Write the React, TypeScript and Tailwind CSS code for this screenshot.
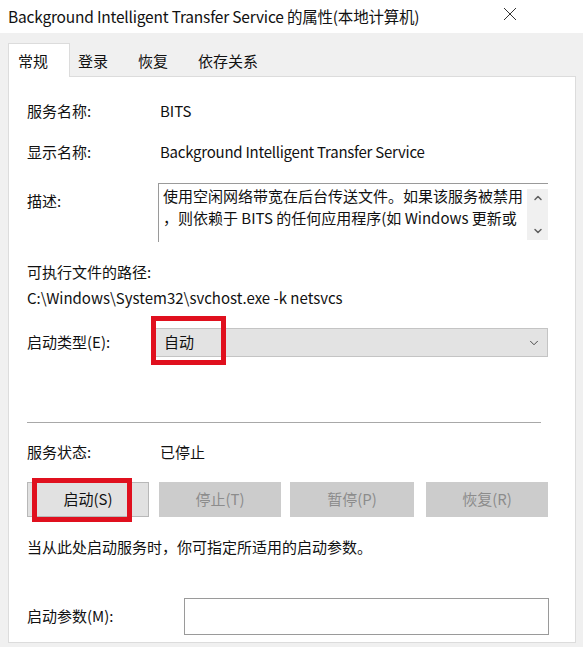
import { ChevronDown, ChevronUp } from 'lucide-react';

const font = { fontFamily: '"Noto Sans CJK SC", "Noto Sans", sans-serif' };

function RedBox({ className }: { className: string }) {
  return <div className={`absolute border-[5px] border-[#e0101e] pointer-events-none ${className}`} />;
}

export default function App() {
  const buttons = [
    { label: '停止(T)', w: 'w-[122px]', ml: 'ml-[10px]' },
    { label: '暂停(P)', w: 'w-[124px]', ml: 'ml-[9px]' },
    { label: '恢复(R)', w: 'w-[122px]', ml: 'ml-[12px]' },
  ];

  return (
    <div className="w-[583px] h-[647px] bg-[#f0f0f0] overflow-hidden flex flex-col text-[15px] text-[#111]" style={font}>
      {/* title bar */}
      <div className="h-[33px] bg-white flex items-center justify-between pl-[8px] pr-[66px] shrink-0">
        <span className="text-[15.5px] leading-none tracking-[-0.2px]">Background Intelligent Transfer Service 的属性(本地计算机)</span>
        <svg width="14" height="14" viewBox="0 0 14 14" className="mb-[6px]">
          <path d="M1 1L13 13M13 1L1 13" stroke="#333" strokeWidth="1" />
        </svg>
      </div>

      {/* tabs */}
      <div className="flex items-end pl-[8px] pt-[9px] h-[43px] shrink-0">
        <div className="w-[62px] h-[34px] bg-white border border-b-0 border-[#dcdcdc] pl-[9px] pt-[6px] relative z-10 -mb-px">常规</div>
        <div className="w-[60px] h-[30px] pl-[8px] pt-[4px]">登录</div>
        <div className="w-[60px] h-[30px] pl-[8px] pt-[4px]">恢复</div>
        <div className="w-[80px] h-[30px] pl-[8px] pt-[4px]">依存关系</div>
      </div>

      {/* panel */}
      <div className="ml-[8px] w-[568px] h-[567px] bg-white border border-[#dcdcdc] flex flex-col pl-[18px] shrink-0">
        <div className="flex items-center h-[20px] mt-[24px]">
          <span className="w-[133px]">服务名称:</span>
          <span>BITS</span>
        </div>
        <div className="flex items-center h-[20px] mt-[21px]">
          <span className="w-[133px]">显示名称:</span>
          <span className="tracking-[-0.25px]">Background Intelligent Transfer Service</span>
        </div>
        <div className="flex mt-[21px]">
          <span className="w-[131px] pt-[7px]">描述:</span>
          <div className="w-[390px] h-[59px] border-t border-l border-[#9a9a9a] flex">
            <div className="flex-1 pl-[4px] pt-[1px] leading-[22px] whitespace-nowrap overflow-hidden">
              <div>使用空闲网络带宽在后台传送文件。如果该服务被禁用</div>
              <div>，则依赖于 BITS 的任何应用程序(如 Windows 更新或</div>
            </div>
            <div className="w-[21px] h-[51px] mt-[5px] bg-[#f0f0f0] flex flex-col items-center justify-between py-[3px] shrink-0">
              <ChevronUp className="w-[12px] h-[12px] text-[#606060]" strokeWidth={3} />
              <ChevronDown className="w-[12px] h-[12px] text-[#606060]" strokeWidth={3} />
            </div>
          </div>
        </div>
        <div className="h-[20px] flex items-center mt-[20px]">可执行文件的路径:</div>
        <div className="h-[20px] flex items-center mt-[6px]">C:\Windows\System32\svchost.exe -k netsvcs</div>
        <div className="flex items-center mt-[20px]">
          <span className="w-[128px]">启动类型(E):</span>
          <div className="relative w-[393px] h-[29px] bg-[#e3e3e3] border border-[#c4c4c4] flex items-center justify-between pl-[8px] pr-[6px]">
            <span>自动</span>
            <ChevronDown className="w-[14px] h-[14px] text-[#333]" strokeWidth={1.5} />
            <RedBox className="-left-[5px] -top-[13px] w-[75px] h-[49px]" />
          </div>
        </div>
        <div className="w-[514px] h-px bg-[#a8a8a8] mt-[65px]" />
        <div className="flex items-center h-[20px] mt-[19px]">
          <span className="w-[133px]">服务状态:</span>
          <span>已停止</span>
        </div>
        <div className="flex mt-[20px]">
          <div className="relative w-[122px] h-[35px] bg-[#e1e1e1] border border-[#b8b8b8] flex items-center justify-center">
            启动(S)
            <RedBox className="left-[4px] -top-[5px] w-[100px] h-[44px]" />
          </div>
          {buttons.map((b) => (
            <div key={b.label} className={`${b.w} ${b.ml} h-[35px] bg-[#cccccc] text-[#8c8c8c] flex items-center justify-center`}>
              {b.label}
            </div>
          ))}
        </div>
        <div className="h-[20px] flex items-center mt-[20px]">当从此处启动服务时，你可指定所适用的启动参数。</div>
        <div className="flex items-center mt-[41px]">
          <span className="w-[157px]">启动参数(M):</span>
          <div className="w-[365px] h-[37px] border border-[#9a9a9a] bg-white" />
        </div>
      </div>
    </div>
  );
}
